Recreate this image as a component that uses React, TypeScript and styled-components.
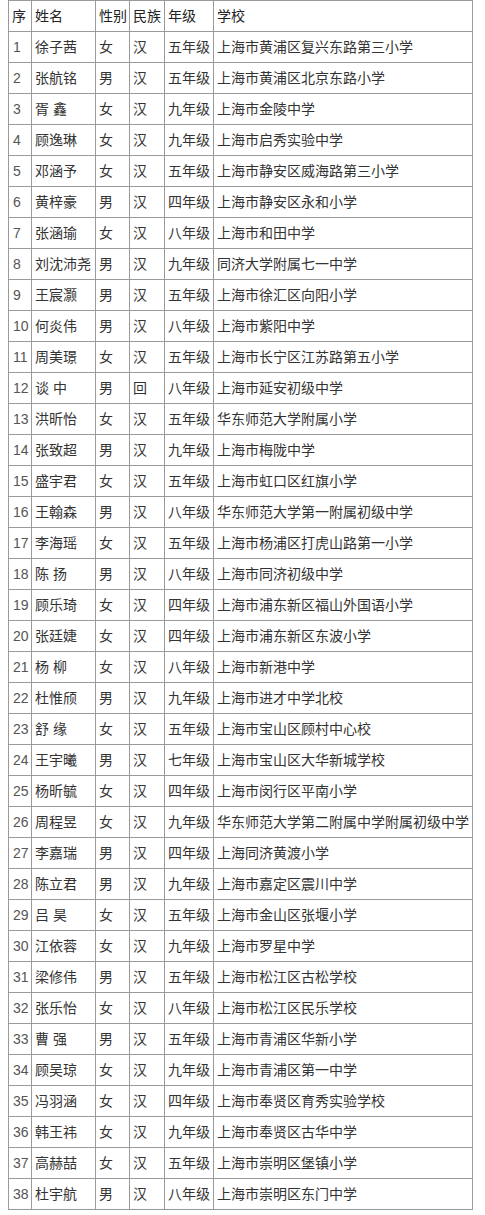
import styled, { createGlobalStyle } from "styled-components";

const GlobalStyle = createGlobalStyle`
  html, body {
    margin: 0;
    padding: 0;
    background: #ffffff;
  }
  body {
    padding-left: 8px;
    font-family: "Liberation Sans", "Noto Sans CJK SC", sans-serif;
  }
`;

const Table = styled.table`
  border-collapse: collapse;
  table-layout: fixed;
  width: 465px;
  border: 1px solid #222;
  font-size: 14px;
  color: #333;
`;

const Cell = styled.td<{ $head?: boolean }>`
  height: 30px;
  padding: 0 0 0 3px;
  border: 1px solid #9a9a9a;
  white-space: nowrap;
  overflow: hidden;
  line-height: 30px;
  vertical-align: middle;
  font-weight: normal;
  color: ${(p) => (p.$head ? "#222" : "#333")};
`;

const NumCell = styled(Cell)`
  padding-left: 4px;
  color: #555;
`;

const widths = [23, 64, 34, 35, 49, 259];

const head = ["序", "姓名", "性别", "民族", "年级", "学校"];

// 名单
const rows: string[][] = [
  ["徐子茜", "女", "汉", "五年级", "上海市黄浦区复兴东路第三小学"],
  ["张航铭", "男", "汉", "五年级", "上海市黄浦区北京东路小学"],
  ["胥 鑫", "女", "汉", "九年级", "上海市金陵中学"],
  ["顾逸琳", "女", "汉", "九年级", "上海市启秀实验中学"],
  ["邓涵予", "女", "汉", "五年级", "上海市静安区威海路第三小学"],
  ["黄梓豪", "男", "汉", "四年级", "上海市静安区永和小学"],
  ["张涵瑜", "女", "汉", "八年级", "上海市和田中学"],
  ["刘沈沛尧", "男", "汉", "九年级", "同济大学附属七一中学"],
  ["王宸灏", "男", "汉", "五年级", "上海市徐汇区向阳小学"],
  ["何炎伟", "男", "汉", "八年级", "上海市紫阳中学"],
  ["周美璟", "女", "汉", "五年级", "上海市长宁区江苏路第五小学"],
  ["谈 中", "男", "回", "八年级", "上海市延安初级中学"],
  ["洪昕怡", "女", "汉", "五年级", "华东师范大学附属小学"],
  ["张致超", "男", "汉", "九年级", "上海市梅陇中学"],
  ["盛宇君", "女", "汉", "五年级", "上海市虹口区红旗小学"],
  ["王翰森", "男", "汉", "八年级", "华东师范大学第一附属初级中学"],
  ["李海瑶", "女", "汉", "五年级", "上海市杨浦区打虎山路第一小学"],
  ["陈 扬", "男", "汉", "八年级", "上海市同济初级中学"],
  ["顾乐琦", "女", "汉", "四年级", "上海市浦东新区福山外国语小学"],
  ["张廷婕", "女", "汉", "四年级", "上海市浦东新区东波小学"],
  ["杨 柳", "女", "汉", "八年级", "上海市新港中学"],
  ["杜惟颀", "男", "汉", "九年级", "上海市进才中学北校"],
  ["舒 缘", "女", "汉", "五年级", "上海市宝山区顾村中心校"],
  ["王宇曦", "男", "汉", "七年级", "上海市宝山区大华新城学校"],
  ["杨昕毓", "女", "汉", "四年级", "上海市闵行区平南小学"],
  ["周程昱", "女", "汉", "九年级", "华东师范大学第二附属中学附属初级中学"],
  ["李嘉瑞", "男", "汉", "四年级", "上海同济黄渡小学"],
  ["陈立君", "男", "汉", "九年级", "上海市嘉定区震川中学"],
  ["吕 昊", "女", "汉", "五年级", "上海市金山区张堰小学"],
  ["江依蓉", "女", "汉", "九年级", "上海市罗星中学"],
  ["梁修伟", "男", "汉", "五年级", "上海市松江区古松学校"],
  ["张乐怡", "女", "汉", "八年级", "上海市松江区民乐学校"],
  ["曹 强", "男", "汉", "五年级", "上海市青浦区华新小学"],
  ["顾吴琼", "女", "汉", "九年级", "上海市青浦区第一中学"],
  ["冯羽涵", "女", "汉", "四年级", "上海市奉贤区育秀实验学校"],
  ["韩王祎", "女", "汉", "九年级", "上海市奉贤区古华中学"],
  ["高赫喆", "女", "汉", "五年级", "上海市崇明区堡镇小学"],
  ["杜宇航", "男", "汉", "八年级", "上海市崇明区东门中学"],
];

const App = () => {
  return (
    <>
      <GlobalStyle />
      <Table>
        <colgroup>
          {widths.map((w, i) => (
            <col key={i} style={{ width: w }} />
          ))}
        </colgroup>
        <tbody>
          <tr>
            {head.map((h) => (
              <Cell key={h} $head>
                {h}
              </Cell>
            ))}
          </tr>
          {rows.map((r, i) => (
            <tr key={i}>
              <NumCell>{i + 1}</NumCell>
              {r.map((c, j) => (
                <Cell key={j}>{c}</Cell>
              ))}
            </tr>
          ))}
        </tbody>
      </Table>
    </>
  );
};

export default App;
